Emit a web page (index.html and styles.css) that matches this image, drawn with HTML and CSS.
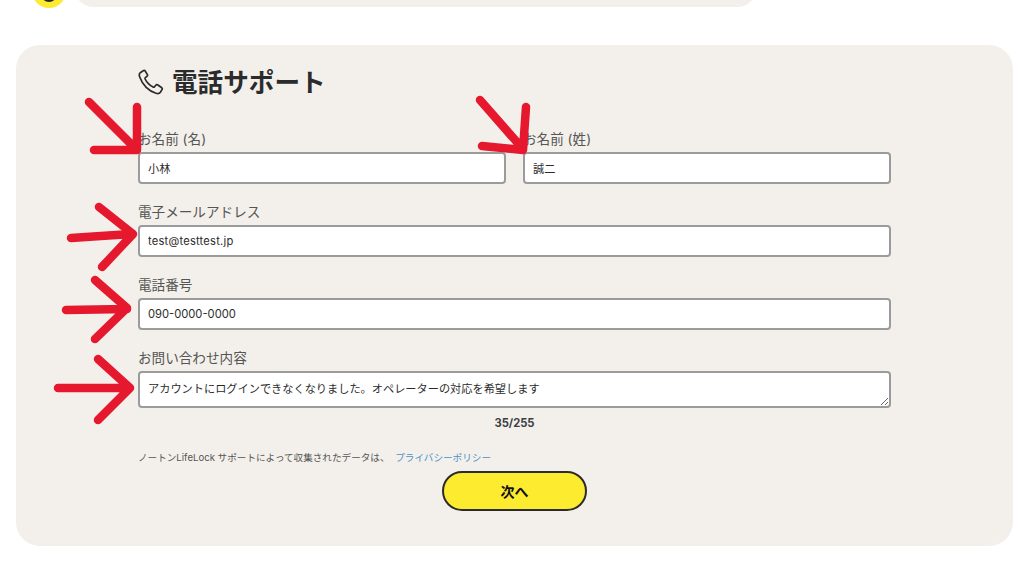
FILE: index.html
```html
<!DOCTYPE html>
<html lang="ja">
<head>
<meta charset="utf-8">
<title>電話サポート</title>
<link rel="stylesheet" href="styles.css">
</head>
<body>
<div class="top-strip">
  <div class="avatar"><span class="avatar-dot"></span></div>
  <div class="bubble"></div>
</div>
<main class="card">
  <form class="form">
    <h1 class="title">
      <svg class="phone" viewBox="0 0 26 26" width="26" height="26" fill="none" stroke="#2b2b2b" stroke-width="1.7" stroke-linejoin="round" stroke-linecap="round"><path d="M5.6 1.6 2.6 3.4C1.2 4.3 1 6 1.7 8c1.3 3.7 3.6 7.400 6.500 10.300 3 2.900 6.300 5 9.800 6 1.900.5 3.500.2 4.400-1.100l1.700-2.800c.3-.6.2-1.200-.3-1.600l-4.300-3c-.5-.3-1.100-.3-1.500.2l-1.500 1.800c-.4.400-.9.500-1.400.3-1.700-.8-3.300-2-4.700-3.400-1.400-1.400-2.500-3-3.300-4.700-.2-.5-.1-1 .3-1.400l1.700-1.500c.5-.4.600-1 .3-1.500L7.200 2c-.4-.6-1-.7-1.600-.4Z"/></svg>
      <span>電話サポート</span>
    </h1>
    <div class="name-row">
      <label class="field"><span class="label">お名前 (名)</span><input class="input" type="text" value="小林"></label>
      <label class="field"><span class="label">お名前 (姓)</span><input class="input" type="text" value="誠二"></label>
    </div>
    <label class="field"><span class="label">電子メールアドレス</span><input class="input email" type="text" value="test@testtest.jp"></label>
    <label class="field"><span class="label">電話番号</span><input class="input" type="text" value="090-0000-0000"></label>
    <label class="field"><span class="label">お問い合わせ内容</span><textarea class="input area">アカウントにログインできなくなりました。オペレーターの対応を希望します</textarea></label>
    <div class="count">35/255</div>
    <p class="privacy">ノートンLifeLock サポートによって収集されたデータは、 <a class="link" href="#">プライバシーポリシー</a></p>
    <div class="actions"><button class="next" type="button">次へ</button></div>
  </form>
</main>
<svg class="marks" viewBox="0 0 1024 575" width="1024" height="575" fill="none" stroke="#e5182e" stroke-width="8.500" stroke-linecap="round" stroke-linejoin="round">
  <path d="M89 102 137 150M137 107 137 150 94 150"/>
  <path d="M480 100 523 149M526 107 523 150 482 146"/>
  <path d="M99 207 133 234 102 267M71 238 131 234"/>
  <path d="M95 280 127 308 95 339M66 310 127 309"/>
  <path d="M98 359 130 388 98 420M58 388 129 388"/>
</svg>
</body>
</html>
```
FILE: styles.css
```css
* { box-sizing: border-box; }
html, body { margin: 0; padding: 0; background: #fff; }
body {
  position: relative;
  width: 1024px;
  height: 575px;
  overflow: hidden;
  font-family: "Inter", "Noto Sans CJK JP", sans-serif;
  color: #2b2b2b;
}
.top-strip {
  height: 8px;
  display: flex;
  align-items: flex-end;
  padding-left: 32px;
  gap: 8px;
  overflow: hidden;
}
.avatar {
  flex: none;
  width: 34px;
  height: 34px;
  margin-top: -26px;
  border-radius: 50%;
  background: #fdeb2f;
  display: flex;
  justify-content: center;
  align-items: flex-end;
}
.avatar-dot {
  width: 16px;
  height: 10px;
  margin-bottom: 6px;
  border-radius: 0 0 8px 8px;
  background: #2b2b2b;
}
.bubble {
  width: 683px;
  height: 40px;
  margin-top: -33px;
  margin-bottom: 1px;
  background: #f3f0eb;
  border-radius: 20px;
}
.card {
  margin: 37px 11px 0 16px;
  height: 501px;
  background: #f3f0eb;
  border-radius: 24px;
  padding: 21px 122px 0 122px;
}
.form { display: flex; flex-direction: column; }
.title {
  display: flex;
  align-items: center;
  gap: 8px;
  margin: 0 0 31px;
  height: 34px;
  font-size: 25.6px;
  line-height: 34px;
  font-weight: 700;
  color: #2b2b2b;
}
.phone { flex: none; margin-top: -2px; }
.name-row {
  display: grid;
  grid-template-columns: 368px 368px;
  gap: 17px;
}
.field { display: flex; flex-direction: column; margin-bottom: 20px; }
.label {
  font-size: 13.6px;
  line-height: 17px;
  height: 17px;
  margin-bottom: 4px;
  color: #555;
}
.input {
  display: block;
  width: 100%;
  height: 32px;
  padding: 0 8px;
  border: 2px solid #9b9b9b;
  border-radius: 4px;
  background: #fff;
  color: #2b2b2b;
  font-family: "Inter", "Noto Sans CJK JP", sans-serif;
  font-size: 11.2px;
  outline: none;
}
.email { letter-spacing: 0.2px; }
.area {
  height: 37px;
  padding: 7px 8px;
  line-height: 18px;
  resize: vertical;
}
.count {
  margin-top: -13px;
  text-align: center;
  font-size: 11.2px;
  line-height: 16px;
  font-weight: 700;
  color: #3a3f45;
  height: 16px;
}
.privacy {
  margin: 18px 0 0;
  height: 16px;
  font-size: 9.6px;
  line-height: 17px;
  color: #555;
}
.link { color: #4a90c8; text-decoration: none; margin-left: 3px; }
.actions { display: flex; justify-content: center; margin-top: 6px; }
.next {
  width: 145px;
  height: 40px;
  border: 2px solid #2b2b2b;
  border-radius: 20px;
  background: #fdeb2f;
  color: #111;
  font-family: "Noto Sans CJK JP", sans-serif;
  font-size: 14px;
  font-weight: 700;
  padding: 0;
}
.marks { position: absolute; left: 0; top: 0; pointer-events: none; }
```
